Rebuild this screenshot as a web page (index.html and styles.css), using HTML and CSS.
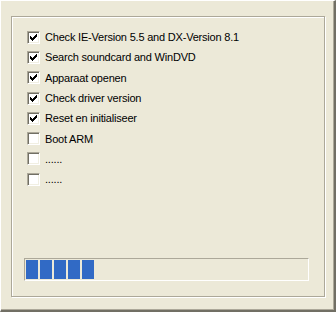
FILE: index.html
```html
<!DOCTYPE html>
<html lang="en">
<head>
    <meta charset="UTF-8">
    <title>Setup</title>
    <link rel="stylesheet" href="styles.css">
</head>
<body>
    <div class="window">
        <div class="group">
            <div class="steps">
                <div class="step"><span class="box checked"><svg viewBox="0 0 9 9" width="9" height="9"><path d="M1 3h1v3H1z M2 4h1v3H2z M3 5h1v3H3z M4 4h1v3H4z M5 3h1v3H5z M6 2h1v3H6z M7 1h1v3H7z"/></svg></span>Check IE-Version 5.5 and DX-Version 8.1</div>
                <div class="step"><span class="box checked"><svg viewBox="0 0 9 9" width="9" height="9"><path d="M1 3h1v3H1z M2 4h1v3H2z M3 5h1v3H3z M4 4h1v3H4z M5 3h1v3H5z M6 2h1v3H6z M7 1h1v3H7z"/></svg></span>Search soundcard and WinDVD</div>
                <div class="step"><span class="box checked"><svg viewBox="0 0 9 9" width="9" height="9"><path d="M1 3h1v3H1z M2 4h1v3H2z M3 5h1v3H3z M4 4h1v3H4z M5 3h1v3H5z M6 2h1v3H6z M7 1h1v3H7z"/></svg></span>Apparaat openen</div>
                <div class="step"><span class="box checked"><svg viewBox="0 0 9 9" width="9" height="9"><path d="M1 3h1v3H1z M2 4h1v3H2z M3 5h1v3H3z M4 4h1v3H4z M5 3h1v3H5z M6 2h1v3H6z M7 1h1v3H7z"/></svg></span>Check driver version</div>
                <div class="step"><span class="box checked"><svg viewBox="0 0 9 9" width="9" height="9"><path d="M1 3h1v3H1z M2 4h1v3H2z M3 5h1v3H3z M4 4h1v3H4z M5 3h1v3H5z M6 2h1v3H6z M7 1h1v3H7z"/></svg></span>Reset en initialiseer</div>
                <div class="step"><span class="box"></span>Boot ARM</div>
                <div class="step"><span class="box"></span>......</div>
                <div class="step"><span class="box"></span>......</div>
            </div>
            <div class="progress">
                <span class="block"></span>
                <span class="block"></span>
                <span class="block"></span>
                <span class="block"></span>
                <span class="block"></span>
            </div>
        </div>
    </div>
</body>
</html>
```

FILE: styles.css
```css
body {
    margin: 0;
    font-family: "Liberation Sans", Arial, sans-serif;
    font-size: 11px;
    letter-spacing: -0.2px;
    color: #000;
}
.window {
    width: 336px;
    height: 312px;
    box-sizing: border-box;
    background: #ECE9D8;
    border-style: solid;
    border-width: 1px 2px 2px 1px;
    border-color: #fff #716F64 #716F64 #fff;
    box-shadow: inset -1px -1px 0 #ACA899;
    padding: 15px 0 0 10px;
}
.group {
    width: 314px;
    height: 281px;
    box-sizing: border-box;
    border: 1px solid #ACA899;
    box-shadow: 1px 1px 0 #fff, inset 1px 1px 0 #fff;
    display: flex;
    flex-direction: column;
    padding: 10px 0 15px 12px;
}
.steps {
    padding-left: 3px;
}
.step {
    height: 20.3px;
    display: flex;
    align-items: center;
    white-space: nowrap;
}
.box {
    width: 13px;
    height: 13px;
    box-sizing: border-box;
    flex: none;
    margin-right: 5px;
    background: #fff;
    border: 1px solid;
    border-color: #ACA899 #fff #fff #ACA899;
    box-shadow: inset 1px 1px 0 #716F64, inset -1px -1px 0 #F1EFE2;
    display: flex;
    align-items: center;
    justify-content: center;
}
.box svg {
    display: block;
    shape-rendering: crispEdges;
}
.progress {
    margin-top: auto;
    width: 285px;
    height: 23px;
    box-sizing: border-box;
    border: 1px solid;
    border-color: #ACA899 #fff #fff #ACA899;
    padding: 1px;
    display: flex;
    gap: 2px;
}
.block {
    width: 12px;
    height: 19px;
    background: #316AC5;
}
```
